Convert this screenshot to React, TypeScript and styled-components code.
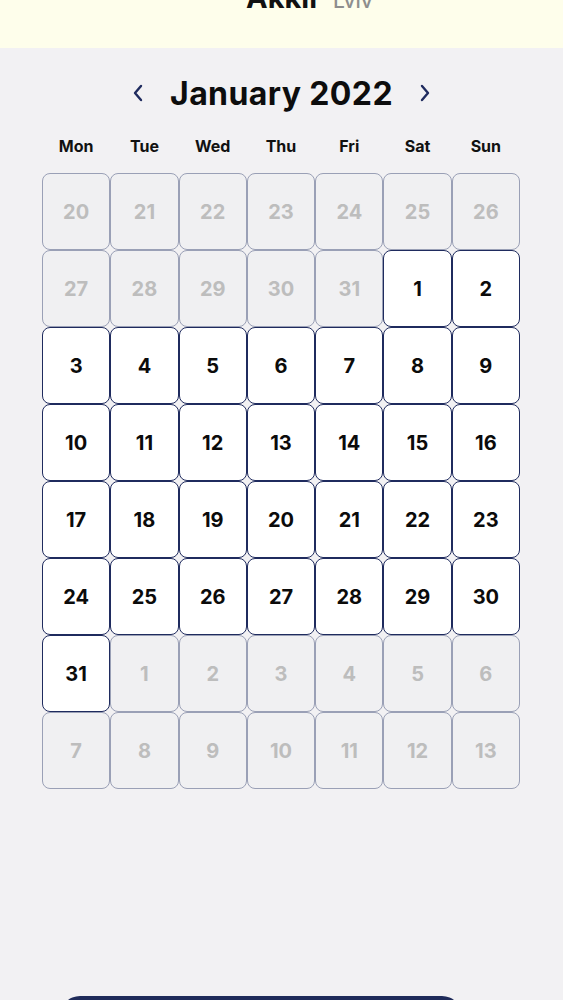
import React from "react";
import styled, { createGlobalStyle } from "styled-components";

const GlobalStyle = createGlobalStyle`
  html, body {
    margin: 0;
    padding: 0;
    background-color: #f2f1f3;
    font-family: "Inter", "Noto Sans", sans-serif;
  }
`;

interface Day {
  num: number;
  current: boolean;
}

const weekDays = ["Mon", "Tue", "Wed", "Thu", "Fri", "Sat", "Sun"];

const buildDays = (): Day[] => {
  const days: Day[] = [];
  for (let i = 20; i <= 31; i++) days.push({ num: i, current: false });
  for (let i = 1; i <= 31; i++) days.push({ num: i, current: true });
  for (let i = 1; i <= 13; i++) days.push({ num: i, current: false });
  return days;
};

const Page = styled.div`
  min-height: 1000px;
  overflow: hidden;
  display: flex;
  flex-direction: column;
`;

const Header = styled.header`
  height: 48px;
  background-color: #fefeeb;
  display: flex;
  justify-content: center;
  align-items: flex-start;
  overflow: hidden;
`;

const HeaderInner = styled.div`
  display: flex;
  align-items: baseline;
  gap: 16px;
  margin-top: -20px;
  padding-left: 56px;
`;

const Brand = styled.span`
  font-size: 29px;
  font-weight: 700;
  color: #111111;
`;

const City = styled.span`
  font-size: 21px;
  font-weight: 500;
  color: #8e8e8e;
`;

const MonthBar = styled.div`
  display: flex;
  justify-content: center;
  align-items: center;
  gap: 26px;
  margin-top: 22px;
  height: 46px;
`;

const ArrowButton = styled.button`
  border: none;
  background: none;
  padding: 0;
  display: flex;
  align-items: center;
  cursor: pointer;
`;

const MonthTitle = styled.h1`
  margin: 0;
  font-size: 32px;
  font-weight: 700;
  color: #0d0d0d;
  letter-spacing: 0.4px;
`;

const Calendar = styled.div`
  width: 478px;
  margin: 0 0 0 42px;
`;

const WeekRow = styled.div`
  display: grid;
  grid-template-columns: repeat(7, 1fr);
  margin-top: 15px;
  height: 30px;
  align-items: center;
`;

const WeekDay = styled.div`
  text-align: center;
  font-size: 16px;
  font-weight: 700;
  color: #111111;
`;

const Grid = styled.div`
  display: grid;
  grid-template-columns: repeat(7, 1fr);
  grid-auto-rows: 77px;
  margin-top: 12px;
`;

const Cell = styled.div<{ $current: boolean }>`
  box-sizing: border-box;
  border: 1.6px solid ${(p) => (p.$current ? "#1f2b5e" : "#9aa0b6")};
  border-radius: 8px;
  background-color: ${(p) => (p.$current ? "#ffffff" : "#f0f0f2")};
  color: ${(p) => (p.$current ? "#0b0b0b" : "#bdbdbd")};
  display: flex;
  justify-content: center;
  align-items: center;
  font-size: 20px;
  font-weight: 700;
`;

const Spacer = styled.div`
  flex: 1;
`;

const BottomButton = styled.button`
  margin: 0 0 -44px 60px;
  width: 402px;
  height: 48px;
  border: none;
  border-radius: 20px;
  background-color: #1f2b5a;
  flex-shrink: 0;
`;

const Chevron = ({ dir }: { dir: "left" | "right" }) => (
  <svg width="12" height="20" viewBox="0 0 12 20" fill="none">
    <path
      d={dir === "left" ? "M9 3 L3 10 L9 17" : "M3 3 L9 10 L3 17"}
      stroke="#1f2b5e"
      strokeWidth="2.4"
      strokeLinecap="round"
      strokeLinejoin="round"
    />
  </svg>
);

const App = () => {
  const days = buildDays();
  return (
    <Page>
      <GlobalStyle />
      <Header>
        <HeaderInner>
          <Brand>Akkii</Brand>
          <City>Lviv</City>
        </HeaderInner>
      </Header>
      <MonthBar>
        <ArrowButton>
          <Chevron dir="left" />
        </ArrowButton>
        <MonthTitle>January 2022</MonthTitle>
        <ArrowButton>
          <Chevron dir="right" />
        </ArrowButton>
      </MonthBar>
      <Calendar>
        <WeekRow>
          {weekDays.map((d) => (
            <WeekDay key={d}>{d}</WeekDay>
          ))}
        </WeekRow>
        <Grid>
          {days.map((d, i) => (
            <Cell key={i} $current={d.current}>
              {d.num}
            </Cell>
          ))}
        </Grid>
      </Calendar>
      <Spacer />
      <BottomButton />
    </Page>
  );
};

export default App;
